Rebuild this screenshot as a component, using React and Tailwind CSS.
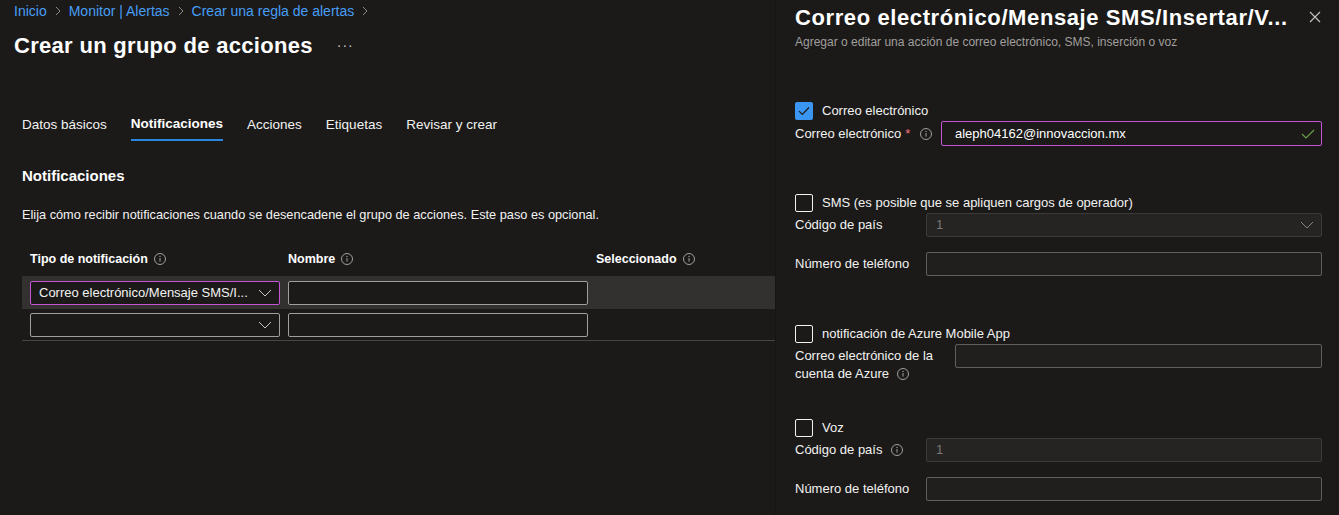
import React from 'react';

const Info = ({ className = '' }) => (
  <svg width="12" height="12" viewBox="0 0 12 12" fill="none" className={className}>
    <circle cx="6" cy="6" r="5.5" stroke="currentColor" />
    <rect x="5.5" y="5" width="1" height="3.6" fill="currentColor" />
    <circle cx="6" cy="3.4" r="0.7" fill="currentColor" />
  </svg>
);

const ChevronDown = ({ className = '' }) => (
  <svg width="14" height="8" viewBox="0 0 14 8" fill="none" className={className}>
    <path d="M1 1l6 6 6-6" stroke="currentColor" strokeWidth="1" />
  </svg>
);

const ChevronRight = () => (
  <svg width="6" height="10" viewBox="0 0 6 10" fill="none" className="text-[#8a8886] mx-[8px]">
    <path d="M1 1l4 4-4 4" stroke="currentColor" strokeWidth="1" />
  </svg>
);

const Checkbox = ({ checked }) =>
  checked ? (
    <span className="w-[18px] h-[18px] rounded-[2px] bg-[#3a96f0] flex items-center justify-center shrink-0">
      <svg width="12" height="10" viewBox="0 0 12 10" fill="none">
        <path d="M1 5.2l3.3 3.3L11 1.5" stroke="#1b1a19" strokeWidth="1.2" />
      </svg>
    </span>
  ) : (
    <span className="w-[18px] h-[18px] rounded-[2px] border border-[#f3f2f1] shrink-0" />
  );

const TextBox = ({ value, disabled, className = '' }) => (
  <div
    className={`h-[24px] flex-1 rounded-[2px] border flex items-center px-[9px] ${
      disabled ? 'bg-[#252423] border-[#3b3a39] text-[#797775]' : 'bg-[#201f1e] border-[#605e5c] text-white'
    } ${className}`}
  >
    {value}
  </div>
);

export default function App() {
  return (
    <div className="w-[1339px] h-[515px] overflow-hidden flex bg-[#1b1a19] text-[#f3f2f1] font-['Liberation_Sans',Arial,sans-serif]">
      {/* left page */}
      <div className="w-[775px] shrink-0">
        <nav className="h-[22px] pl-[14px] flex items-center text-[14px] text-[#479ef5]">
          <span>Inicio</span>
          <ChevronRight />
          <span>Monitor | Alertas</span>
          <ChevronRight />
          <span>Crear una regla de alertas</span>
          <ChevronRight />
        </nav>
        <div className="mt-[9px] h-[28px] pl-[14px] flex items-center">
          <h1 className="text-[22px] font-bold text-white tracking-[0.3px]">Crear un grupo de acciones</h1>
          <span className="ml-[24px] text-[14px] text-[#c8c6c4] tracking-[1px]">···</span>
        </div>

        <div className="mt-[48px] pl-[22px] flex gap-[24px] text-[13.5px]">
          <div className="h-[34px] flex items-center pt-[3px]">Datos básicos</div>
          <div className="h-[34px] flex items-center pt-[3px] font-bold text-white border-b-2 border-[#2886de]">Notificaciones</div>
          <div className="h-[34px] flex items-center pt-[3px]">Acciones</div>
          <div className="h-[34px] flex items-center pt-[3px]">Etiquetas</div>
          <div className="h-[34px] flex items-center pt-[3px]">Revisar y crear</div>
        </div>

        <h2 className="mt-[24px] pl-[22px] h-[22px] flex items-center text-[15px] font-bold text-white">Notificaciones</h2>
        <p className="mt-[19px] pl-[22px] h-[18px] flex items-center text-[12.75px]">
          Elija cómo recibir notificaciones cuando se desencadene el grupo de acciones. Este paso es opcional.
        </p>

        <div className="mt-[26px] ml-[22px]">
          <div className="h-[18px] flex items-center text-[12.5px] font-bold text-white pl-[8px]">
            <div className="w-[258px] flex items-center gap-[6px]">
              Tipo de notificación <Info className="text-[#a19f9d]" />
            </div>
            <div className="w-[308px] flex items-center gap-[6px]">
              Nombre <Info className="text-[#a19f9d]" />
            </div>
            <div className="flex items-center gap-[6px]">
              Seleccionado <Info className="text-[#a19f9d]" />
            </div>
          </div>
          <div className="mt-[8px] h-[33px] bg-[#323130] flex items-center pl-[8px]">
            <div className="w-[250px] h-[24px] rounded-[2px] border border-[#c454d8] bg-[#1b1a19] flex items-center justify-between pl-[8px] pr-[7px] text-[13px]">
              <span>Correo electrónico/Mensaje SMS/I...</span>
              <ChevronDown className="text-[#c8c6c4]" />
            </div>
            <div className="ml-[8px] w-[300px] h-[24px] rounded-[2px] border border-[#a19f9d] bg-[#1b1a19]" />
          </div>
          <div className="h-[32px] flex items-center pl-[8px] border-b border-[#484644]">
            <div className="w-[250px] h-[24px] rounded-[2px] border border-[#a19f9d] bg-[#1b1a19] flex items-center justify-end pr-[7px]">
              <ChevronDown className="text-[#c8c6c4]" />
            </div>
            <div className="ml-[8px] w-[300px] h-[24px] rounded-[2px] border border-[#a19f9d] bg-[#1b1a19]" />
          </div>
        </div>
      </div>

      {/* right panel */}
      <div className="flex-1 border-l border-[#161514] pl-[19px] pr-[17px] text-[13px]">
        <div className="mt-[3px] h-[28px] flex items-center justify-between">
          <h2 className="text-[22px] text-white font-semibold tracking-[0.6px]">Correo electrónico/Mensaje SMS/Insertar/V...</h2>
          <svg width="12" height="12" viewBox="0 0 12 12" fill="none" className="text-[#c8c6c4] mr-[1px]">
            <path d="M1 1l10 10M11 1L1 11" stroke="currentColor" strokeWidth="1.1" />
          </svg>
        </div>
        <p className="mt-[3px] h-[16px] flex items-center text-[12px] text-[#a19f9d]">
          Agregar o editar una acción de correo electrónico, SMS, inserción o voz
        </p>

        <label className="mt-[51px] h-[20px] flex items-center gap-[9px]">
          <Checkbox checked />
          Correo electrónico
        </label>
        <div className="h-[25px] flex items-center">
          <div className="w-[146px] flex items-center">
            Correo electrónico <span className="text-[#f1707b] ml-[4px]">*</span>
            <Info className="text-[#a19f9d] ml-[10px]" />
          </div>
          <div className="flex-1 h-[25px] rounded-[2px] border border-[#c454d8] bg-[#1b1a19] flex items-center justify-between pl-[13px] pr-[6px] text-[13px] text-white">
            <span>aleph04162@innovaccion.mx</span>
            <svg width="14" height="10" viewBox="0 0 14 10" fill="none">
              <path d="M1 5l4 4 8-8" stroke="#6ba048" strokeWidth="1.1" />
            </svg>
          </div>
        </div>

        <label className="mt-[47px] h-[20px] flex items-center gap-[9px]">
          <Checkbox />
          SMS (es posible que se apliquen cargos de operador)
        </label>
        <div className="h-[24px] flex items-center">
          <div className="w-[131px]">Código de país</div>
          <div className="flex-1 h-[24px] rounded-[2px] border border-[#3b3a39] bg-[#252423] flex items-center justify-between pl-[9px] pr-[7px] text-[#797775]">
            <span>1</span>
            <ChevronDown className="text-[#8a8886]" />
          </div>
        </div>
        <div className="mt-[15px] h-[24px] flex items-center">
          <div className="w-[131px]">Número de teléfono</div>
          <TextBox />
        </div>

        <label className="mt-[48px] h-[20px] flex items-center gap-[9px]">
          <Checkbox />
          notificación de Azure Mobile App
        </label>
        <div className="flex items-start">
          <div className="w-[160px] pt-[3px] leading-[18px]">
            Correo electrónico de la
            <br />
            <span className="inline-flex items-center gap-[8px]">
              cuenta de Azure <Info className="text-[#a19f9d]" />
            </span>
          </div>
          <TextBox />
        </div>

        <label className="mt-[35px] h-[20px] flex items-center gap-[9px]">
          <Checkbox />
          Voz
        </label>
        <div className="h-[24px] flex items-center">
          <div className="w-[131px] flex items-center gap-[9px]">
            Código de país <Info className="text-[#a19f9d]" />
          </div>
          <TextBox value="1" disabled />
        </div>
        <div className="mt-[15px] h-[24px] flex items-center">
          <div className="w-[131px]">Número de teléfono</div>
          <TextBox />
        </div>
      </div>
    </div>
  );
}
